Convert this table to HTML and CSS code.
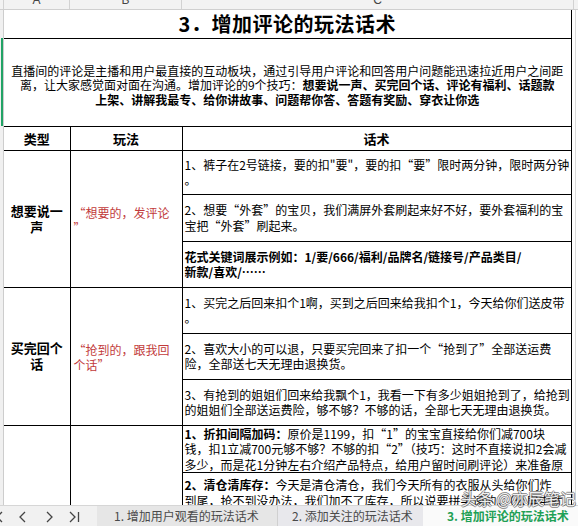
FILE: index.html
```html
<!DOCTYPE html>
<html lang="zh-CN">
<head>
<meta charset="utf-8">
<title>3. 增加评论的玩法话术</title>
<link rel="stylesheet" href="styles.css">
</head>
<body>
<div class="sheet">
  <div class="colhead">
    <div class="ch ch-g"></div>
    <div class="ch ch-a"><span>A</span></div>
    <div class="ch ch-b"><span>B</span></div>
    <div class="ch ch-c"><span>C</span></div>
    <div class="ch ch-r"></div>
  </div>
  <div class="body">
    <div class="gutter"><div class="gut-sp"></div><div class="gut-sel"></div></div>
    <table class="grid">
      <colgroup><col class="c-a"><col class="c-b"><col class="c-c"></colgroup>
      <tr class="r-title"><td colspan="3" class="title">3．增加评论的玩法话术</td></tr>
      <tr class="r-intro"><td colspan="3" class="intro">直播间的评论是主播和用户最直接的互动板块，通过引导用户评论和回答用户问题能迅速拉近用户之间距<br>离，让大家感觉面对面在沟通。增加评论的9个技巧：<b>想要说一声、买完回个话、评论有福利、话题款</b><br><b>上架、讲解我最专、给你讲故事、问题帮你答、答题有奖励、穿衣让你选</b></td></tr>
      <tr class="r-head"><th>类型</th><th>玩法</th><th>话术</th></tr>
      <tr class="r44">
        <td rowspan="3" class="type">想要说一<br>声</td>
        <td rowspan="3" class="play">“想要的，发评论<br>”</td>
        <td class="talk">1、裤子在2号链接，要的扣"要"，要的扣“要”限时两分钟，限时两分钟<br>。</td>
      </tr>
      <tr class="r47"><td class="talk">2、想要“外套”的宝贝，我们满屏外套刷起来好不好，要外套福利的宝<br>宝把“外套”刷起来。</td></tr>
      <tr class="r46"><td class="talk strong">花式关键词展示例如：1/要/666/福利/品牌名/链接号/产品类目/<br>新款/喜欢/……</td></tr>
      <tr class="r46">
        <td rowspan="3" class="type">买完回个<br>话</td>
        <td rowspan="3" class="play">“抢到的，跟我回<br>个话”</td>
        <td class="talk">1、买完之后回来扣个1啊，买到之后回来给我扣个1，今天给你们送皮带<br>。</td>
      </tr>
      <tr class="r46"><td class="talk">2、喜欢大小的可以退，只要买完回来了扣一个“抢到了”全部送运费<br>险，全部送七天无理由退换货。</td></tr>
      <tr class="r46"><td class="talk">3、有抢到的姐姐们回来给我飘个1，我看一下有多少姐姐抢到了，给抢到<br>的姐姐们全部送运费险，够不够？不够的话，全部七天无理由退换货。</td></tr>
      <tr class="r46">
        <td rowspan="2" class="type"></td>
        <td rowspan="2" class="play"></td>
        <td class="talk"><b>1、折扣间隔加码：</b>原价是1199，扣“1”的宝宝直接给你们减700块<br>钱，扣1立减700元够不够？不够的扣“2”（技巧：这时不直接说扣2会减<br>多少，而是花1分钟左右介绍产品特点，给用户留时间刷评论）来准备原</td>
      </tr>
      <tr class="r-last"><td class="talk top"><b>2、清仓清库存：</b>今天是清仓清仓，我们今天所有的衣服从头给你们炸<br>到尾，抢不到没办法，我们加不了库存，所以说要拼手速的。（公屏中就<br>会有很多人问，怎么抢，在哪里抢）</td></tr>
    </table>
    <div class="rgutter"><div class="rline"></div></div>
  </div>
  <div class="tabs">
    <div class="nav">
      <svg width="97" height="21" viewBox="0 0 97 21" fill="none" stroke="#444" stroke-width="1.3">
        <polyline points="2,6 -3,11 2,16"/>
        <polyline points="25,6 20,11 25,16"/>
        <polyline points="47,6 52,11 47,16"/>
        <polyline points="70,6 75,11 70,16"/>
        <line x1="78.5" y1="6" x2="78.5" y2="16"/>
      </svg>
    </div>
    <div class="tab t1">1. 增加用户观看的玩法话术</div>
    <div class="tab t2">2. 添加关注的玩法话术</div>
    <div class="tab t3">3. 增加评论的玩法话术</div>
  </div>
  <div class="watermark">头条 @亦辰笔记</div>
</div>
</body>
</html>
```
FILE: styles.css
```css
* { box-sizing: border-box; }
html, body { margin: 0; padding: 0; background: #fff; }
body { font-family: "Noto Sans CJK SC", "Liberation Sans", sans-serif; font-size: 12px; color: #000; }
.sheet { position: relative; width: 578px; height: 526px; overflow: hidden; display: flex; flex-direction: column; }

.colhead { height: 10px; display: flex; background: #f2f2f2; border-bottom: 1px solid #cfcfcf; flex: none; }
.ch { height: 9px; overflow: hidden; text-align: center; border-right: 1px solid #d2d2d2; color: #444; font-family: "Liberation Sans", sans-serif; font-size: 12px; }
.ch span { display: block; line-height: 14px; margin-top: -7px; }
.ch-g { width: 4px; }
.ch-a { width: 66px; }
.ch-b { width: 112px; }
.ch-c { width: 392px; }
.ch-r { flex: 1; border-right: none; }

.body { flex: 1; display: flex; overflow: hidden; }
.gutter { width: 4px; flex: none; background: #f0f0f0; border-right: 1px solid #cdcdcd; }
.gut-sp { height: 28px; }
.gut-sel { height: 88px; width: 2px; margin-left: 1px; background: #21a366; }
.rgutter { flex: 1; padding-left: 3px; }
.rline { height: 100%; border-left: 1px solid #dadada; }

.grid { width: 567px; flex: none; table-layout: fixed; border-collapse: collapse; align-self: flex-start; }
.c-a { width: 66px; }
.c-b { width: 112px; }
.c-c { width: 389px; }
.grid td, .grid th { border: 1px solid #000; padding: 0 2px; overflow: hidden; white-space: nowrap; }
.grid tr > :first-child { border-left: none; }

.r-title td { height: 28px; border-top: none; }
.r-intro td { height: 88px; }
.r-head th { height: 24px; }
.r44 td { height: 44px; }
.r47 td { height: 47px; }
.r46 td { height: 46px; }
.r-last td { height: 80px; }

.grid .title { text-align: center; font-size: 20px; font-weight: 700; line-height: 26px; vertical-align: top; padding-top: 1px; letter-spacing: 0.5px; }
.grid .intro { text-align: center; line-height: 14.5px; vertical-align: top; padding-top: 25px; }
.intro b { font-weight: 700; }
.grid th { font-size: 13px; font-weight: 700; text-align: center; }
.type { text-align: center; font-weight: 700; font-size: 13px; line-height: 16px; }
.grid .play { color: #c23b3b; line-height: 15px; vertical-align: middle; padding-left: 3px; padding-top: 2px; }
.talk { line-height: 15.5px; vertical-align: middle; }
.talk b, .strong { font-weight: 700; }
.grid .top { vertical-align: top; padding-top: 4px; }

.tabs { height: 21px; flex: none; display: flex; background: #f1f1f1; border-top: 1px solid #d6d6d6; font-size: 12px; line-height: 20px; color: #4a4a4a; }
.nav { width: 97px; flex: none; }
.nav svg { display: block; }
.tab { white-space: nowrap; }
.t1 { width: 181px; background: #e6e6e6; padding-left: 17px; border-right: 1px solid #d0d0d0; }
.t2 { width: 145px; background: #e8e8ec; padding-left: 14px; }
.t3 { flex: 1; background: #fafafa; color: #1fa055; font-weight: 700; padding-left: 24px; }

.watermark { position: absolute; left: 461px; top: 488px; font-size: 16px; line-height: 20px; color: rgba(255,255,255,0.92); white-space: nowrap;
  text-shadow: 1px 0 0 rgba(60,60,60,.55), -1px 0 0 rgba(60,60,60,.55), 0 1px 0 rgba(60,60,60,.55), 0 -1px 0 rgba(60,60,60,.55); }
```
